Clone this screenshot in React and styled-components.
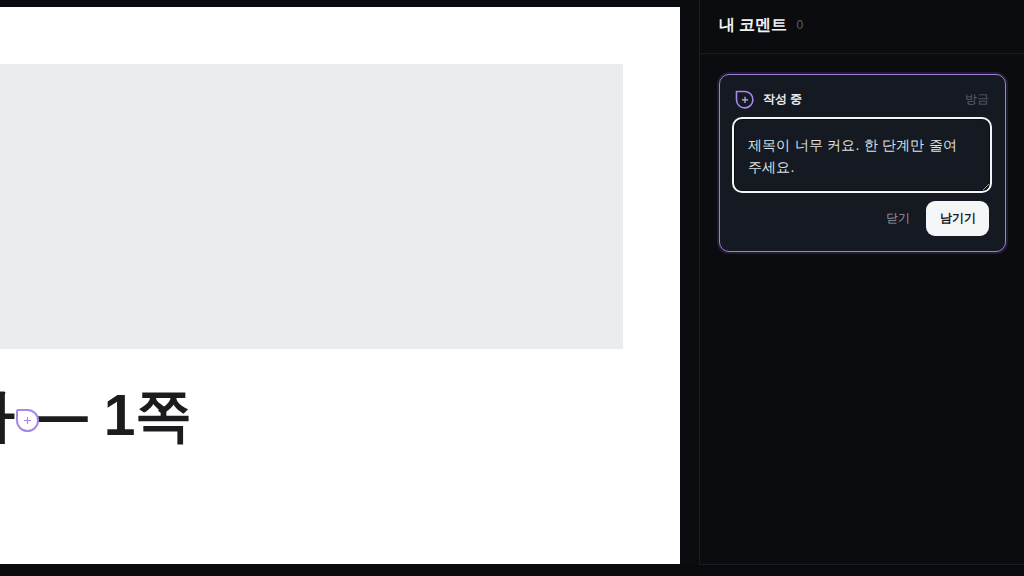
import React from "react";
import styled, { createGlobalStyle } from "styled-components";

const FONT = `"Liberation Sans", sans-serif`;

const Global = createGlobalStyle`
  html, body { margin: 0; padding: 0; height: 100%; background: #090a0e; overflow: hidden; }
  * { box-sizing: border-box; }
  body { font-family: ${FONT}; }
`;

const Page = styled.div`
  width: 1024px;
  height: 576px;
  display: flex;
  align-items: flex-start;
  background: #090a0e;
  overflow: hidden;
`;

const Stage = styled.main`
  width: 700px;
  height: 565px;
  flex: none;
  background: #0a0c10;
  padding: 7px 19px 1px 0;
  border-right: 1px solid #1a1c21;
`;

const Sheet = styled.section`
  width: 680px;
  height: 557px;
  background: #fff;
  padding-top: 57px;
  overflow: hidden;
  display: flex;
  flex-direction: column;
`;

const Figure = styled.div`
  width: 623px;
  height: 285px;
  flex: none;
  background: #e9ecef;
`;

const Heading = styled.h1`
  position: relative;
  margin: 30px 0 0 -42px;
  font-size: 57px;
  line-height: 72px;
  font-weight: 700;
  color: #1c1c1e;
  white-space: nowrap;
`;

const Pin = styled.span`
  position: absolute;
  left: 58px;
  top: 30px;
  width: 23px;
  height: 23px;
  display: flex;
  align-items: center;
  justify-content: center;
  background: #fff;
  border: 2px solid #a888e6;
  border-radius: 2px 50% 50% 50%;
`;

const Side = styled.aside`
  flex: 1;
  height: 565px;
  display: flex;
  flex-direction: column;
  background: #0a0c10;
  border-bottom: 1px solid #1a1c21;
`;

const SideHead = styled.header`
  height: 54px;
  flex: none;
  display: flex;
  align-items: center;
  gap: 9px;
  padding: 0 19px 3px;
  border-bottom: 1px solid #1a1c21;
`;

const SideTitle = styled.h2`
  margin: 0;
  font-size: 16px;
  font-weight: 700;
  color: #f1f3f5;
`;

const Count = styled.span`
  font-size: 12px;
  color: #5c6068;
`;

const Body = styled.div`
  padding: 20px 18px 0 19px;
`;

const Card = styled.article`
  height: 178px;
  padding: 10px 16px 0 12px;
  background: #151922;
  border: 1px solid #a07fd6;
  border-radius: 10px;
  box-shadow: 0 0 0 2px #211c33;
`;

const CardHead = styled.div`
  height: 29px;
  margin-bottom: -1px;
  display: flex;
  align-items: center;
  gap: 8px;
  padding-left: 3px;
`;

const CardTitle = styled.span`
  font-size: 12px;
  font-weight: 700;
  color: #e9ebee;
`;

const Time = styled.span`
  margin-left: auto;
  font-size: 12px;
  color: #5b5f68;
`;

const Note = styled.textarea`
  display: block;
  width: calc(100% + 3px);
  height: 76px;
  margin-top: 4px;
  padding: 15px 14px 13px;
  background: #151922;
  border: 2px solid #f4f5f6;
  border-radius: 10px;
  box-shadow: inset 0 0 0 1px #0b0d12;
  outline: none;
  font: 400 14px/22.4px ${FONT};
  letter-spacing: 0.2px;
  word-break: keep-all;
  color: #dfe1e4;
`;

const Actions = styled.div`
  display: flex;
  justify-content: flex-end;
  align-items: center;
  gap: 8px;
  margin-top: 8px;
`;

const Ghost = styled.button`
  width: 40px;
  height: 34px;
  padding: 0;
  border: 0;
  background: none;
  font: 400 12px ${FONT};
  color: #9a9da3;
`;

const Primary = styled.button`
  width: 63px;
  height: 35px;
  padding: 0;
  border: 0;
  border-radius: 9px;
  background: #f4f5f6;
  font: 700 12px ${FONT};
  color: #17191e;
`;

const DropIcon = () => (
  <svg width="20" height="20" viewBox="0 0 20 20" fill="none" aria-hidden="true">
    <path d="M1.5 1.5H10a8.2 8.2 0 1 1-8.5 8.2z" stroke="#a888e6" strokeWidth="1.6" strokeLinejoin="round" />
    <path d="M10 6.8v6.2M6.9 9.9h6.2" stroke="#c9b4f0" strokeWidth="1.2" />
  </svg>
);

const PinPlus = () => (
  <svg width="9" height="9" viewBox="0 0 9 9" fill="none" aria-hidden="true">
    <path d="M4.5 1v7M1 4.5h7" stroke="#a888e6" strokeWidth="1.1" />
  </svg>
);

export default function App() {
  return (
    <Page>
      <Global />
      <Stage>
        <Sheet>
          <Figure />
          <Heading>
            다 — 1쪽
            <Pin><PinPlus /></Pin>
          </Heading>
        </Sheet>
      </Stage>
      <Side>
        <SideHead>
          <SideTitle>내 코멘트</SideTitle>
          <Count>0</Count>
        </SideHead>
        <Body>
          <Card>
            <CardHead>
              <DropIcon />
              <CardTitle>작성 중</CardTitle>
              <Time>방금</Time>
            </CardHead>
            <Note defaultValue="제목이 너무 커요. 한 단계만 줄여 주세요." />
            <Actions>
              <Ghost>닫기</Ghost>
              <Primary>남기기</Primary>
            </Actions>
          </Card>
        </Body>
      </Side>
    </Page>
  );
}
